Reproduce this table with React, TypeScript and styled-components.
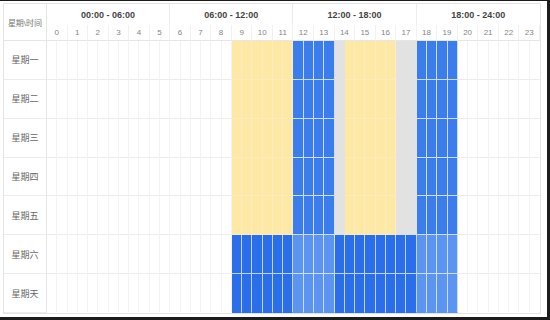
import styled, { createGlobalStyle } from 'styled-components';

/* ── Data ── */

type Slot = 'empty' | 'plan' | 'off' | 'on' | 'full' | 'soft';

const DAYS = ['星期一', '星期二', '星期三', '星期四', '星期五', '星期六', '星期天'];
const RANGES = ['00:00 - 06:00', '06:00 - 12:00', '12:00 - 18:00', '18:00 - 24:00'];
const HOURS = Array.from({ length: 24 }, (_, i) => i);

const weekdaySlot = (h: number): Slot => {
    if (h >= 18 && h < 24) return 'plan';
    if (h >= 24 && h < 28) return 'on';
    if (h === 28) return 'off';
    if (h >= 29 && h < 34) return 'plan';
    if (h >= 34 && h < 36) return 'off';
    if (h >= 36 && h < 40) return 'on';
    return 'empty';
};

const weekendSlot = (h: number): Slot => {
    if (h >= 18 && h < 24) return 'full';
    if (h >= 24 && h < 28) return 'soft';
    if (h >= 28 && h < 36) return 'full';
    if (h >= 36 && h < 40) return 'soft';
    return 'empty';
};

const slotFill: Record<Slot, string> = {
    empty: '#ffffff',
    plan: '#fde8a6',
    off: '#e2e2e2',
    on: '#3b7ded',
    full: '#2a6fe9',
    soft: '#5b94f1',
};

const slotLine: Record<Slot, string> = {
    empty: '#f3f3f3',
    plan: '#fcecbc',
    off: '#e2e2e2',
    on: 'rgba(255,255,255,0.75)',
    full: 'rgba(255,255,255,0.7)',
    soft: 'rgba(255,255,255,0.7)',
};

/* ── Styles ── */

const GlobalStyle = createGlobalStyle`
    html, body {
        margin: 0;
        padding: 0;
        background: #1c1c1c;
    }
    body {
        font-family: "Liberation Sans", "Noto Sans CJK SC", sans-serif;
    }
`;

const Frame = styled.div`
    width: 547px;
    height: 316px;
    margin-top: 1px;
    background: #ffffff;
    padding: 2px 2px 0 3px;
    box-sizing: border-box;
`;

const Table = styled.div`
    display: grid;
    grid-template-columns: 43px repeat(48, 1fr);
    grid-template-rows: 21px 16px repeat(7, 1fr);
    width: 538px;
    height: 311px;
    border: 1px solid #e4e4e4;
    box-sizing: border-box;
`;

const Corner = styled.div`
    grid-row: 1 / span 2;
    grid-column: 1;
    display: flex;
    align-items: center;
    justify-content: center;
    font-size: 8px;
    color: #777;
    white-space: nowrap;
    border-right: 1px solid #e6e6e6;
    border-bottom: 1px solid #e6e6e6;
`;

const RangeHead = styled.div`
    grid-row: 1;
    grid-column: span 12;
    display: flex;
    align-items: center;
    justify-content: center;
    font-size: 9px;
    font-weight: 700;
    color: #444;
    border-right: 1px solid #ececec;
    &:nth-child(5) { border-right: none; }
`;

const HourHead = styled.div`
    grid-row: 2;
    grid-column: span 2;
    display: flex;
    align-items: center;
    justify-content: center;
    font-size: 8px;
    color: #858585;
    border-right: 1px solid #f1f1f1;
    border-bottom: 1px solid #e6e6e6;
`;

const DayLabel = styled.div`
    grid-column: 1;
    display: flex;
    align-items: center;
    justify-content: center;
    font-size: 9px;
    color: #666;
    border-right: 1px solid #e6e6e6;
    border-bottom: 1px solid #ececec;
    &:last-of-type { border-bottom: none; }
`;

const Cell = styled.div<{ $slot: Slot; $last: boolean; $bottom: boolean }>`
    background: ${p => slotFill[p.$slot]};
    border-right: 1px solid ${p => (p.$last ? 'transparent' : slotLine[p.$slot])};
    border-bottom: 1px solid ${p => (p.$bottom ? 'transparent' : p.$slot === 'empty' ? '#ececec' : slotLine[p.$slot])};
`;

/* ── Component ── */

export default function App() {
    return (
        <>
            <GlobalStyle />
            <Frame>
                <Table>
                    <Corner>星期\时间</Corner>
                    {RANGES.map(r => (
                        <RangeHead key={r}>{r}</RangeHead>
                    ))}
                    {HOURS.map(h => (
                        <HourHead key={h}>{h}</HourHead>
                    ))}
                    {DAYS.map((d, row) => {
                        const pick = row < 5 ? weekdaySlot : weekendSlot;
                        return [
                            <DayLabel key={d} style={{ gridRow: row + 3 }}>{d}</DayLabel>,
                            ...Array.from({ length: 48 }, (_, h) => (
                                <Cell
                                    key={`${d}-${h}`}
                                    $slot={pick(h)}
                                    $last={h === 47}
                                    $bottom={row === 6}
                                />
                            )),
                        ];
                    })}
                </Table>
            </Frame>
        </>
    );
}
